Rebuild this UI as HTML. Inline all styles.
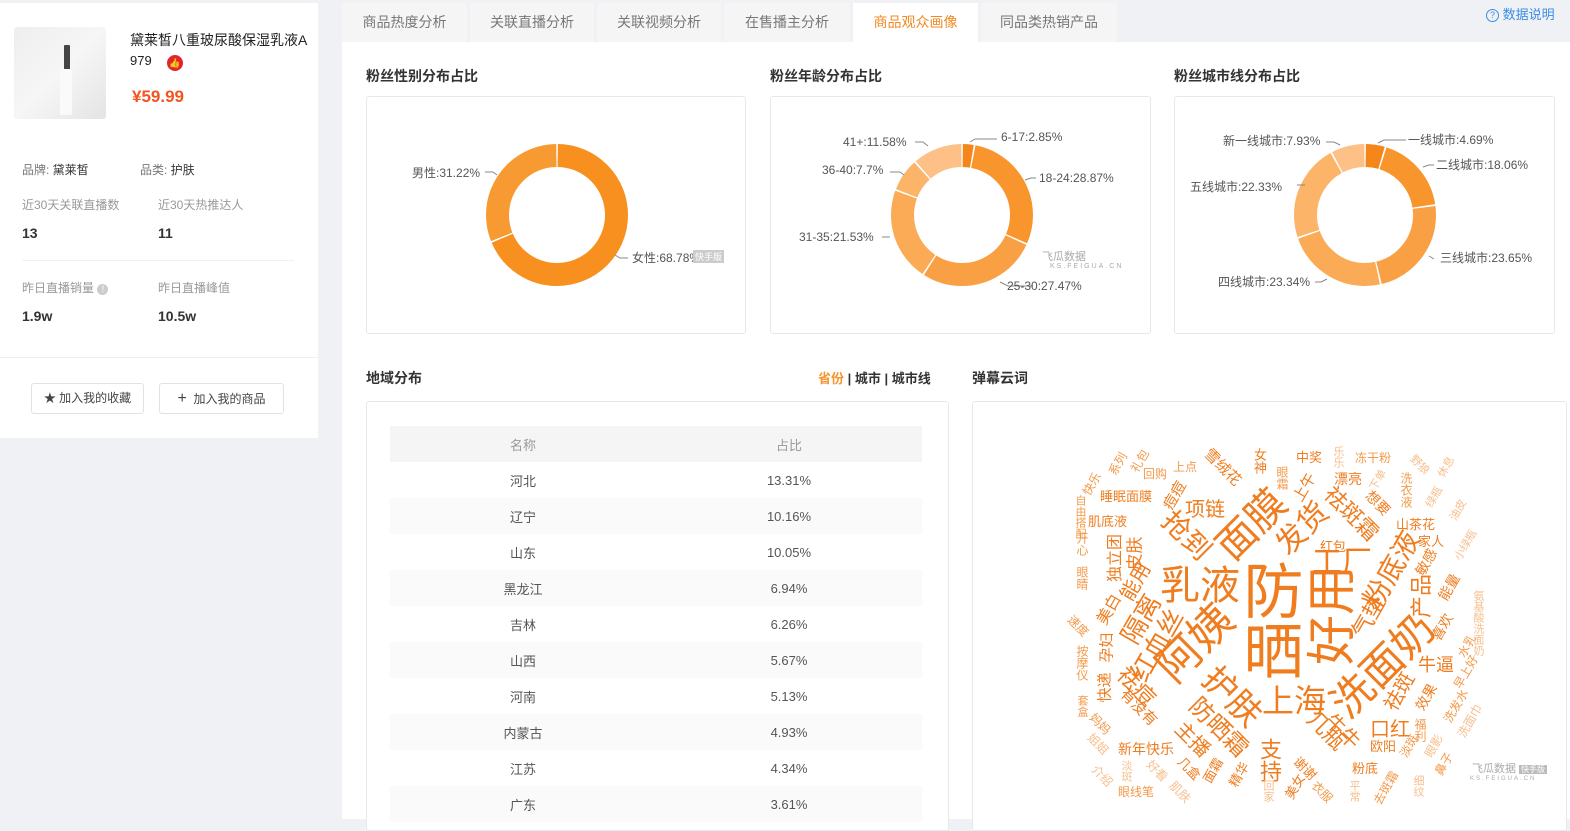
<!DOCTYPE html>
<html><head><meta charset="utf-8"><style>
*{margin:0;padding:0;box-sizing:border-box}
body{width:1570px;height:819px;overflow:hidden;background:#f0f1f5;font-family:"Liberation Sans","Noto Sans CJK SC",sans-serif;color:#333;position:relative;font-size:13px}
.a{position:absolute;white-space:nowrap}
.left{position:absolute;left:0;top:3px;width:318px;height:435px;background:#fff}
.tab{position:absolute;top:3px;height:39px;background:#f5f5f5;color:#777;font-size:14px;text-align:center;line-height:39px}
.main{position:absolute;left:342px;top:42px;width:1228px;height:777px;background:#fff}
.ttl{font-weight:bold;font-size:14px;color:#333}
.box{position:absolute;border:1px solid #e8e8e8;border-radius:3px;background:#fff}
.lbl{position:absolute;font-size:12px;color:#555;white-space:nowrap}
.btn{position:absolute;top:383px;height:31px;border:1px solid #e2e2e2;border-radius:3px;font-size:12px;color:#444;line-height:29px;text-align:center}
table{border-collapse:collapse;width:532px;font-size:13px;color:#555}
td,th{height:36px;text-align:center;font-weight:normal;width:50%}
th{background:#f5f5f5;color:#999}
tr:nth-child(odd) td{background:#fafafa}
.w{position:absolute;white-space:nowrap;line-height:1;color:#ef7d1f;transform-origin:center center}
.m{color:#f39a4a}.l{color:#f7bf8e}
.vr{writing-mode:vertical-rl}
.wm{position:absolute;color:#aaa;font-size:11px;white-space:nowrap}
</style></head><body>
<div class="left">
 <div class="a" style="left:14px;top:24px;width:92px;height:92px;background:linear-gradient(135deg,#eeeeee,#f6f6f6 50%,#e4e4e4);border-radius:3px"></div>
 <div class="a" style="left:64px;top:42px;width:6px;height:26px;background:#444;border-radius:1px"></div>
 <div class="a" style="left:60px;top:66px;width:12px;height:46px;background:#fafafa;border-radius:2px"></div>
 <div class="a" style="left:130px;top:27px;font-size:14px;color:#222">黛莱皙八重玻尿酸保湿乳液A</div>
 <div class="a" style="left:130px;top:50px;font-size:13px;color:#222">979</div>
 <div class="a" style="left:167px;top:52px;width:16px;height:16px;border-radius:50%;background:#e3262c;color:#fff;font-size:9px;text-align:center;line-height:16px">👍</div>
 <div class="a" style="left:132px;top:84px;font-size:17px;font-weight:bold;color:#f5531f">¥59.99</div>
 <div class="a" style="left:22px;top:158px;font-size:12px;color:#777">品牌: <span style="color:#333">黛莱皙</span></div>
 <div class="a" style="left:140px;top:158px;font-size:12px;color:#777">品类: <span style="color:#333">护肤</span></div>
 <div class="a" style="left:22px;top:193px;font-size:12px;color:#999">近30天关联直播数</div>
 <div class="a" style="left:158px;top:193px;font-size:12px;color:#999">近30天热推达人</div>
 <div class="a" style="left:22px;top:222px;font-size:14px;font-weight:bold;color:#333">13</div>
 <div class="a" style="left:158px;top:222px;font-size:14px;font-weight:bold;color:#333">11</div>
 <div class="a" style="left:22px;top:257px;width:272px;height:1px;background:#f0f0f0"></div>
 <div class="a" style="left:22px;top:276px;font-size:12px;color:#999">昨日直播销量 <span style="display:inline-block;width:11px;height:11px;border-radius:50%;background:#ccc;color:#fff;font-size:9px;text-align:center;line-height:11px">!</span></div>
 <div class="a" style="left:158px;top:276px;font-size:12px;color:#999">昨日直播峰值</div>
 <div class="a" style="left:22px;top:305px;font-size:14px;font-weight:bold;color:#333">1.9w</div>
 <div class="a" style="left:158px;top:305px;font-size:14px;font-weight:bold;color:#333">10.5w</div>
 <div class="a" style="left:0;top:354px;width:318px;height:1px;background:#f0f0f0"></div>
</div>
<div class="btn" style="left:31px;width:113px">★ 加入我的收藏</div>
<div class="btn" style="left:159px;width:125px"><span style="font-size:16px">+</span>&nbsp; 加入我的商品</div>

<div class="tab" style="left:342px;width:125px">商品热度分析</div>
<div class="tab" style="left:470px;width:124px">关联直播分析</div>
<div class="tab" style="left:597px;width:124px">关联视频分析</div>
<div class="tab" style="left:724px;width:126px">在售播主分析</div>
<div class="tab" style="left:853px;width:125px;background:#fff;color:#f08a24">商品观众画像</div>
<div class="tab" style="left:981px;width:136px">同品类热销产品</div>
<div class="a" style="left:1486px;top:4px;font-size:13px;color:#3a8ee6"><span style="display:inline-block;width:13px;height:13px;border:1.5px solid #3a8ee6;border-radius:50%;font-size:9px;text-align:center;line-height:10px;vertical-align:1px">?</span> 数据说明</div>

<div class="main"></div>
<div class="a ttl" style="left:366px;top:66px">粉丝性别分布占比</div>
<div class="a ttl" style="left:770px;top:66px">粉丝年龄分布占比</div>
<div class="a ttl" style="left:1174px;top:66px">粉丝城市线分布占比</div>
<div class="box" style="left:366px;top:96px;width:380px;height:238px"></div>
<div class="box" style="left:770px;top:96px;width:381px;height:238px"></div>
<div class="box" style="left:1174px;top:96px;width:381px;height:238px"></div>

<svg class="a" style="left:0;top:0" width="1570" height="340" viewBox="0 0 1570 340">
 <g fill="none" stroke-width="23">
  <g transform="translate(557,215) rotate(-90)">
   <circle r="59.5" stroke="#f7901e" stroke-dasharray="255.6 400" stroke-dashoffset="-0.75"/>
   <circle r="59.5" stroke="#f89a32" stroke-dasharray="115.2 400" stroke-dashoffset="-257.85"/>
  </g>
  <g transform="translate(962,215) rotate(-90)">
   <circle r="59.5" stroke="#f5861a" stroke-dasharray="9.15 400" stroke-dashoffset="-0.75"/>
   <circle r="59.5" stroke="#f8952c" stroke-dasharray="106.4 400" stroke-dashoffset="-11.4"/>
   <circle r="59.5" stroke="#f9a044" stroke-dasharray="101.2 400" stroke-dashoffset="-119.3"/>
   <circle r="59.5" stroke="#fbaa56" stroke-dasharray="79 400" stroke-dashoffset="-222"/>
   <circle r="59.5" stroke="#fcb468" stroke-dasharray="27.3 400" stroke-dashoffset="-302.5"/>
   <circle r="59.5" stroke="#fdc187" stroke-dasharray="41.8 400" stroke-dashoffset="-331.3"/>
  </g>
  <g transform="translate(1365,215) rotate(-90)">
   <circle r="59.5" stroke="#f5861a" stroke-dasharray="16 400" stroke-dashoffset="-0.75"/>
   <circle r="59.5" stroke="#f8952c" stroke-dasharray="66 400" stroke-dashoffset="-18.3"/>
   <circle r="59.5" stroke="#f9a044" stroke-dasharray="86.9 400" stroke-dashoffset="-85.8"/>
   <circle r="59.5" stroke="#fbaa56" stroke-dasharray="85.8 400" stroke-dashoffset="-174.2"/>
   <circle r="59.5" stroke="#fcb468" stroke-dasharray="82 400" stroke-dashoffset="-261.5"/>
   <circle r="59.5" stroke="#fdc187" stroke-dasharray="28.1 400" stroke-dashoffset="-345"/>
  </g>
 </g>
 <g fill="none" stroke="#888" stroke-width="1">
  <path d="M485 172h8l4 3"/><path d="M615 255l5 3h8"/>
  <path d="M915 142h8l5 4"/><path d="M970 142l5-3h22"/><path d="M1025 180l6-2h5"/><path d="M1000 282l8 4h25"/><path d="M890 172h10l4 3"/><path d="M882 237h8"/>
  <path d="M1326 142h8l6 3"/><path d="M1378 143l6-3h22"/><path d="M1423 167l6-2h5"/><path d="M1429 256l5 3"/><path d="M1297 185h8"/><path d="M1315 282h6l6-3"/>
 </g>
</svg>
<div class="lbl" style="left:412px;top:164px">男性:31.22%</div>
<div class="lbl" style="left:632px;top:249px">女性:68.78%</div>
<div class="wm" style="left:693px;top:250px;font-size:9px;background:#ccc;color:#fff;padding:0 2px">快手版</div>
<div class="lbl" style="left:843px;top:135px">41+:11.58%</div>
<div class="lbl" style="left:1001px;top:130px">6-17:2.85%</div>
<div class="lbl" style="left:822px;top:163px">36-40:7.7%</div>
<div class="lbl" style="left:1039px;top:171px">18-24:28.87%</div>
<div class="lbl" style="left:799px;top:230px">31-35:21.53%</div>
<div class="lbl" style="left:1007px;top:279px">25-30:27.47%</div>
<div class="wm" style="left:1042px;top:248px">飞瓜数据</div><div class="wm" style="left:1050px;top:263px;font-size:7px;letter-spacing:2px">KS.FEIGUA.CN</div>
<div class="lbl" style="left:1223px;top:132px">新一线城市:7.93%</div>
<div class="lbl" style="left:1408px;top:131px">一线城市:4.69%</div>
<div class="lbl" style="left:1190px;top:178px">五线城市:22.33%</div>
<div class="lbl" style="left:1436px;top:156px">二线城市:18.06%</div>
<div class="lbl" style="left:1440px;top:249px">三线城市:23.65%</div>
<div class="lbl" style="left:1218px;top:273px">四线城市:23.34%</div>

<div class="a ttl" style="left:366px;top:368px">地域分布</div>
<div class="a" style="left:818px;top:368px;font-size:13px;font-weight:bold;color:#333"><span style="color:#f7932a">省份</span> | 城市 | 城市线</div>
<div class="a ttl" style="left:972px;top:368px">弹幕云词</div>
<div class="box" style="left:366px;top:401px;width:583px;height:430px"></div>
<div class="box" style="left:972px;top:401px;width:595px;height:430px"></div>
<table class="a" style="left:390px;top:426px">
<tr><th>名称</th><th>占比</th></tr>
<tr><td>河北</td><td>13.31%</td></tr>
<tr><td>辽宁</td><td>10.16%</td></tr>
<tr><td>山东</td><td>10.05%</td></tr>
<tr><td>黑龙江</td><td>6.94%</td></tr>
<tr><td>吉林</td><td>6.26%</td></tr>
<tr><td>山西</td><td>5.67%</td></tr>
<tr><td>河南</td><td>5.13%</td></tr>
<tr><td>内蒙古</td><td>4.93%</td></tr>
<tr><td>江苏</td><td>4.34%</td></tr>
<tr><td>广东</td><td>3.61%</td></tr>
</table>

<!-- word cloud -->
<div class="w vr" style="left:1238px;top:560px;font-size:60px">防晒</div>
<div class="w" style="left:1282px;top:590px;font-size:50px;transform:rotate(-90deg)">好用</div>
<div class="w" style="left:1160px;top:566px;font-size:40px">乳液</div>
<div class="w" style="left:1212px;top:505px;font-size:40px;transform:rotate(-45deg)">面膜</div>
<div class="w" style="left:1152px;top:622px;font-size:44px;transform:rotate(-45deg)">阿姨</div>
<div class="w" style="left:1320px;top:645px;font-size:42px;transform:rotate(-45deg)">洗面奶</div>
<div class="w" style="left:1262px;top:685px;font-size:32px">上海</div>
<div class="w" style="left:1198px;top:680px;font-size:34px;transform:rotate(45deg)">护肤</div>
<div class="w" style="left:1312px;top:548px;font-size:30px">工厂</div>
<div class="w" style="left:1350px;top:556px;font-size:28px;transform:rotate(-60deg)">粉底液</div>
<div class="w" style="left:1273px;top:514px;font-size:30px;transform:rotate(-45deg)">发货</div>
<div class="w" style="left:1158px;top:522px;font-size:28px;transform:rotate(45deg)">抢到</div>
<div class="w" style="left:1115px;top:606px;font-size:26px;transform:rotate(-60deg)">隔离</div>
<div class="w" style="left:1118px;top:632px;font-size:26px;transform:rotate(-60deg)">红血丝</div>
<div class="w" style="left:1182px;top:716px;font-size:24px;transform:rotate(45deg)">防晒霜</div>
<div class="w" style="left:1185px;top:500px;font-size:20px">项链</div>
<div class="w" style="left:1318px;top:503px;font-size:22px;transform:rotate(45deg)">祛斑霜</div>
<div class="w" style="left:1114px;top:676px;font-size:22px;transform:rotate(45deg)">祛痘</div>
<div class="w" style="left:1304px;top:720px;font-size:22px;transform:rotate(45deg)">几瓶</div>
<div class="w vr" style="left:1258px;top:738px;font-size:22px">支持</div>
<div class="w" style="left:1322px;top:722px;font-size:20px;transform:rotate(45deg)">牛牛</div>
<div class="w" style="left:1370px;top:720px;font-size:20px">口红</div>
<div class="w" style="left:1418px;top:656px;font-size:18px">牛逼</div>
<div class="w" style="left:1347px;top:606px;font-size:22px;transform:rotate(-60deg)">气垫</div>
<div class="w" style="left:1400px;top:585px;font-size:22px;transform:rotate(-90deg)">产品</div>
<div class="w" style="left:1172px;top:730px;font-size:20px;transform:rotate(45deg)">主播</div>
<div class="w" style="left:1380px;top:682px;font-size:20px;transform:rotate(-60deg)">祛斑</div>
<div class="w" style="left:1116px;top:572px;font-size:20px;transform:rotate(-60deg)">能用</div>
<div class="w" style="left:1118px;top:545px;font-size:17px;transform:rotate(-90deg)">皮肤</div>
<div class="w" style="left:1092px;top:550px;font-size:16px;transform:rotate(-90deg)">独立团</div>
<div class="w" style="left:1094px;top:602px;font-size:16px;transform:rotate(-60deg)">美白</div>
<div class="w" style="left:1092px;top:640px;font-size:15px;transform:rotate(-90deg)">孕妇</div>
<div class="w" style="left:1090px;top:680px;font-size:15px;transform:rotate(-90deg)">快递</div>
<div class="w" style="left:1116px;top:700px;font-size:15px;transform:rotate(45deg)">有没有</div>
<div class="w" style="left:1118px;top:742px;font-size:14px">新年快乐</div>
<div class="w" style="left:1100px;top:490px;font-size:13px">睡眠面膜</div>
<div class="w" style="left:1088px;top:515px;font-size:13px">肌底液</div>
<div class="w" style="left:1160px;top:488px;font-size:15px;transform:rotate(-60deg)">痘痘</div>
<div class="w" style="left:1200px;top:460px;font-size:15px;transform:rotate(45deg)">雪绒花</div>
<div class="w" style="left:1296px;top:451px;font-size:13px">中奖</div>
<div class="w" style="left:1290px;top:480px;font-size:15px;transform:rotate(-60deg)">上午</div>
<div class="w" style="left:1334px;top:472px;font-size:14px">漂亮</div>
<div class="w" style="left:1320px;top:540px;font-size:13px">红包</div>
<div class="w" style="left:1396px;top:518px;font-size:13px">山茶花</div>
<div class="w" style="left:1418px;top:535px;font-size:13px">家人</div>
<div class="w" style="left:1412px;top:555px;font-size:14px;transform:rotate(-60deg)">敏感</div>
<div class="w" style="left:1364px;top:496px;font-size:14px;transform:rotate(45deg)">想要</div>
<div class="w" style="left:1435px;top:580px;font-size:14px;transform:rotate(-60deg)">能量</div>
<div class="w" style="left:1428px;top:620px;font-size:14px;transform:rotate(-60deg)">喜欢</div>
<div class="w" style="left:1412px;top:690px;font-size:14px;transform:rotate(-60deg)">效果</div>
<div class="w" style="left:1370px;top:740px;font-size:13px">欧阳</div>
<div class="w" style="left:1352px;top:762px;font-size:13px">粉底</div>
<div class="w" style="left:1292px;top:762px;font-size:13px;transform:rotate(45deg)">谢谢</div>
<div class="w" style="left:1282px;top:780px;font-size:13px;transform:rotate(-60deg)">美女</div>
<div class="w" style="left:1226px;top:768px;font-size:13px;transform:rotate(-60deg)">精华</div>
<div class="w" style="left:1200px;top:764px;font-size:13px;transform:rotate(-60deg)">面霜</div>
<div class="w" style="left:1176px;top:762px;font-size:13px;transform:rotate(45deg)">几盒</div>
<div class="w vr" style="left:1253px;top:448px;font-size:13px">女神</div>
<div class="w m vr" style="left:1276px;top:466px;font-size:12px">眼霜</div>
<div class="w m" style="left:1355px;top:452px;font-size:12px">冻干粉</div>
<div class="w m" style="left:1173px;top:461px;font-size:12px">上点</div>
<div class="w m" style="left:1143px;top:468px;font-size:12px">回购</div>
<div class="w m" style="left:1106px;top:458px;font-size:12px;transform:rotate(-60deg)">系列</div>
<div class="w m" style="left:1128px;top:455px;font-size:12px;transform:rotate(-60deg)">礼包</div>
<div class="w m" style="left:1080px;top:478px;font-size:12px;transform:rotate(-60deg)">快乐</div>
<div class="w m vr" style="left:1074px;top:495px;font-size:11px">自由搭配</div>
<div class="w m vr" style="left:1076px;top:532px;font-size:12px">开心</div>
<div class="w m vr" style="left:1076px;top:566px;font-size:12px">眼睛</div>
<div class="w m" style="left:1066px;top:620px;font-size:12px;transform:rotate(45deg)">速度</div>
<div class="w m vr" style="left:1076px;top:645px;font-size:12px">按摩仪</div>
<div class="w m vr" style="left:1076px;top:695px;font-size:11px">套盒</div>
<div class="w m" style="left:1088px;top:718px;font-size:12px;transform:rotate(45deg)">妈妈</div>
<div class="w l" style="left:1086px;top:738px;font-size:12px;transform:rotate(45deg)">姐姐</div>
<div class="w l" style="left:1090px;top:770px;font-size:12px;transform:rotate(45deg)">介绍</div>
<div class="w l vr" style="left:1120px;top:760px;font-size:11px">淡斑</div>
<div class="w l" style="left:1145px;top:765px;font-size:12px;transform:rotate(45deg)">好看</div>
<div class="w m" style="left:1118px;top:786px;font-size:12px">眼线笔</div>
<div class="w l" style="left:1168px;top:786px;font-size:12px;transform:rotate(45deg)">肌肤</div>
<div class="w l vr" style="left:1262px;top:780px;font-size:11px">回家</div>
<div class="w m" style="left:1310px;top:786px;font-size:12px;transform:rotate(45deg)">衣服</div>
<div class="w l vr" style="left:1348px;top:780px;font-size:11px">平常</div>
<div class="w m" style="left:1368px;top:782px;font-size:12px;transform:rotate(-60deg)">去斑霜</div>
<div class="w l vr" style="left:1412px;top:775px;font-size:11px">细纹</div>
<div class="w m" style="left:1397px;top:740px;font-size:12px;transform:rotate(-60deg)">淡斑</div>
<div class="w m vr" style="left:1414px;top:718px;font-size:12px">福利</div>
<div class="w l" style="left:1422px;top:740px;font-size:12px;transform:rotate(-60deg)">眼影</div>
<div class="w m" style="left:1432px;top:758px;font-size:12px;transform:rotate(-60deg)">鼻子</div>
<div class="w m" style="left:1438px;top:700px;font-size:12px;transform:rotate(-60deg)">洗发水</div>
<div class="w l" style="left:1452px;top:715px;font-size:12px;transform:rotate(-60deg)">洗面巾</div>
<div class="w m" style="left:1448px;top:666px;font-size:12px;transform:rotate(-60deg)">早上好</div>
<div class="w m" style="left:1455px;top:640px;font-size:12px;transform:rotate(-60deg)">水乳</div>
<div class="w l vr" style="left:1472px;top:590px;font-size:11px">氨基酸洗面奶</div>
<div class="w l" style="left:1450px;top:540px;font-size:11px;transform:rotate(-60deg)">小绿瓶</div>
<div class="w l" style="left:1448px;top:505px;font-size:11px;transform:rotate(-60deg)">油皮</div>
<div class="w l" style="left:1424px;top:492px;font-size:11px;transform:rotate(-60deg)">绿瓶</div>
<div class="w m vr" style="left:1400px;top:472px;font-size:12px">洗衣液</div>
<div class="w l" style="left:1408px;top:460px;font-size:11px;transform:rotate(45deg)">野狼</div>
<div class="w l" style="left:1436px;top:462px;font-size:11px;transform:rotate(-60deg)">休息</div>
<div class="w l" style="left:1368px;top:475px;font-size:11px;transform:rotate(-60deg)">下单</div>
<div class="w l vr" style="left:1332px;top:446px;font-size:11px">乐乐</div>
<div class="wm" style="left:1472px;top:760px">飞瓜数据 <span style="background:#bbb;color:#fff;font-size:8px;padding:0 2px">快手版</span></div>
<div class="wm" style="left:1470px;top:776px;font-size:6px;letter-spacing:2px">KS.FEIGUA.CN</div>
</body></html>
